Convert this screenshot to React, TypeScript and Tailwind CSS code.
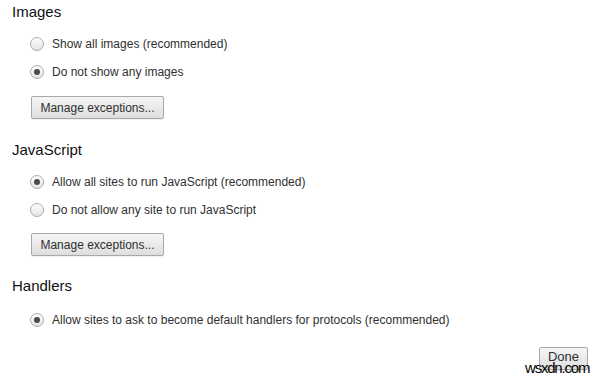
import React from 'react'

interface RadioRowProps {
    label: string
    checked?: boolean
}

const RadioRow: React.FC<RadioRowProps> = ({ label, checked }) => {
    return (
        <div className="h-[28px] flex items-center pl-[30px]">
            <span className="w-[14px] h-[14px] rounded-full border border-[#a9a9a9] bg-gradient-to-b from-[#fdfdfd] to-[#e4e4e4] flex items-center justify-center shadow-[inset_0_1px_0_#fff]">
                {checked && <span className="w-[6px] h-[6px] rounded-full bg-[#4a4a4a]" />}
            </span>
            <span className="ml-[8px] text-[12px] text-[#303030] whitespace-nowrap">{label}</span>
        </div>
    )
}

const GrayButton: React.FC<{ children: React.ReactNode; className?: string }> = ({
    children,
    className = '',
}) => {
    return (
        <button
            className={`block h-[23px] rounded-[2px] border border-[#a8a8a8] bg-gradient-to-b from-[#f6f6f6] to-[#dedede] text-[12px] text-[#303030] leading-none whitespace-nowrap shadow-[0_1px_0_rgba(0,0,0,0.06)] ${className}`}
        >
            {children}
        </button>
    )
}

const Heading: React.FC<{ children: React.ReactNode; className?: string }> = ({
    children,
    className = '',
}) => <h2 className={`text-[15px] leading-[18px] text-[#111] pl-[12px] ${className}`}>{children}</h2>

export default function App() {
    return (
        <div
            className="relative w-[600px] h-[379px] bg-white overflow-hidden"
            style={{ fontFamily: '"Liberation Sans", Arial, sans-serif' }}
        >
            <div className="pt-[3px]">
                {/* Images */}
                <Heading>Images</Heading>
                <div className="mt-[9px]">
                    <RadioRow label="Show all images (recommended)" />
                    <RadioRow label="Do not show any images" checked />
                </div>
                <GrayButton className="ml-[31px] mt-[10px] w-[133px]">Manage exceptions...</GrayButton>

                {/* JavaScript */}
                <Heading className="mt-[22px]">JavaScript</Heading>
                <div className="mt-[9px]">
                    <RadioRow label="Allow all sites to run JavaScript (recommended)" checked />
                    <RadioRow label="Do not allow any site to run JavaScript" />
                </div>
                <GrayButton className="ml-[31px] mt-[9px] w-[133px]">Manage exceptions...</GrayButton>

                {/* Handlers */}
                <Heading className="mt-[21px]">Handlers</Heading>
                <div className="mt-[11px]">
                    <RadioRow label="Allow sites to ask to become default handlers for protocols (recommended)" checked />
                </div>

                <div className="flex justify-end pr-[12px] mt-[13px]">
                    <GrayButton className="w-[49px] pb-[4px] text-[13px]">Done</GrayButton>
                </div>
            </div>

            {/* watermark */}
            <span className="absolute left-[525px] top-[360px] text-[15px] leading-none text-black tracking-[-1.2px]">
                wsxdn.com
            </span>
        </div>
    )
}
